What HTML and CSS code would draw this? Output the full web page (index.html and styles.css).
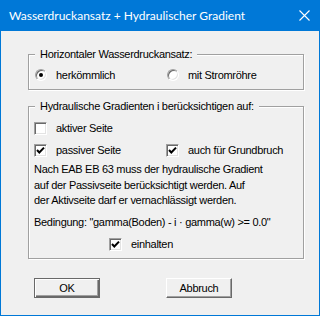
FILE: index.html
```html
<!DOCTYPE html>
<html lang="de">
<head>
    <meta charset="UTF-8">
    <title>Wasserdruckansatz + Hydraulischer Gradient</title>
    <link rel="stylesheet" href="styles.css">
</head>
<body>
<div class="dialog">
    <div class="titlebar">
        <span class="title">Wasserdruckansatz + Hydraulischer Gradient</span>
        <svg class="close" width="11" height="11" viewBox="0 0 11 11">
            <path d="M0.5 0.5 L10.5 10.5 M10.5 0.5 L0.5 10.5" stroke="#fff" stroke-width="1.1" fill="none"/>
        </svg>
    </div>
    <div class="client">
        <fieldset class="group g1">
            <legend>Horizontaler Wasserdruckansatz:</legend>
            <div class="row">
                <label class="opt"><span class="radio on"></span>herkömmlich</label>
                <label class="opt"><span class="radio"></span>mit Stromröhre</label>
            </div>
        </fieldset>
        <fieldset class="group g2">
            <legend>Hydraulische Gradienten i berücksichtigen auf:</legend>
            <div class="row">
                <label class="opt"><span class="check"></span>aktiver Seite</label>
            </div>
            <div class="row r2">
                <label class="opt"><span class="check on"><svg width="9" height="9" viewBox="0 0 9 9"><path d="M1 4 L3.3 6.5 L8 1.6" stroke="#000" stroke-width="2" fill="none"/></svg></span>passiver Seite</label>
                <label class="opt"><span class="check on"><svg width="9" height="9" viewBox="0 0 9 9"><path d="M1 4 L3.3 6.5 L8 1.6" stroke="#000" stroke-width="2" fill="none"/></svg></span>auch für Grundbruch</label>
            </div>
            <p class="note">Nach EAB EB 63 muss der hydraulische Gradient<br>auf der Passivseite berücksichtigt werden. Auf<br>der Aktivseite darf er vernachlässigt werden.</p>
            <p class="cond">Bedingung: "gamma(Boden) - i · gamma(w) &gt;= 0.0"</p>
            <div class="row r3">
                <label class="opt"><span class="check on"><svg width="9" height="9" viewBox="0 0 9 9"><path d="M1 4 L3.3 6.5 L8 1.6" stroke="#000" stroke-width="2" fill="none"/></svg></span>einhalten</label>
            </div>
        </fieldset>
        <div class="buttons">
            <button class="btn default">OK</button>
            <button class="btn">Abbruch</button>
        </div>
    </div>
</div>
</body>
</html>
```
FILE: styles.css
```css
*{
    box-sizing: border-box;
}
body{
    margin: 0;
    background: #f0f0f0;
}
.dialog{
    width: 320px;
    height: 316px;
    border: 1px solid #0078d7;
    border-top: 0;
    background: #f0f0f0;
    font-family: "Liberation Sans", Arial, sans-serif;
    font-size: 11px;
    letter-spacing: -0.3px;
    color: #000;
}
.titlebar{
    height: 31px;
    margin: 0 -1px;
    background: #0078d7;
    display: flex;
    align-items: center;
    padding: 0 10px 1px 9px;
}
.title{
    flex: 1;
    color: #fff;
    font-family: Lato, sans-serif;
    font-size: 12px;
    letter-spacing: 0;
}
.close{
    display: block;
    margin-top: 1px;
}
.client{
    padding: 16px 0 0 27px;
}
.group{
    width: 269px;
    margin: 0;
    padding: 0 5px 6px 5px;
    border: 1px solid #a0a0a0;
    box-shadow: 1px 1px 0 #fff, inset 1px 1px 0 #fff;
}
.group legend{
    margin-left: 1px;
    padding: 0 5px;
    line-height: 14px;
    background: #f0f0f0;
}
.g1 .row{
    margin-top: 6px;
}
.g2{
    margin-top: 9px;
}
.g2 .row{
    margin-top: 7px;
}
.g2 .r2{
    margin-top: 6px;
}
.row{
    display: flex;
    height: 16px;
    align-items: center;
}
.opt{
    width: 132px;
    display: flex;
    align-items: center;
    white-space: nowrap;
}
.radio, .check{
    flex: none;
    width: 13px;
    height: 13px;
    margin-right: 9px;
    background: #fff;
    border: 1px solid;
    border-color: #a0a0a0 #fff #fff #a0a0a0;
    box-shadow: inset 1px 1px 0 #696969, inset -1px -1px 0 #e3e3e3;
    display: flex;
    align-items: center;
    justify-content: center;
}
.radio{
    width: 12px;
    height: 12px;
    margin-left: 1px;
    margin-right: 9px;
    border-radius: 50%;
}
.radio.on::after{
    content: "";
    width: 4px;
    height: 4px;
    border-radius: 50%;
    background: #000;
}
.check svg{
    display: block;
}
.note{
    margin: 4px 0 0;
    line-height: 15.5px;
}
.cond{
    margin: 6px 0 0;
    line-height: 15.5px;
}
.g2 .r3{
    margin-top: 6px;
    padding-left: 75px;
}
.buttons{
    display: flex;
    margin-top: 19px;
    padding-left: 6px;
}
.btn{
    width: 66px;
    height: 20px;
    margin: 0 66px 0 0;
    padding: 0;
    font-family: "Liberation Sans", Arial, sans-serif;
    font-size: 11px;
    letter-spacing: -0.3px;
    color: #000;
    background: #f0f0f0;
    border: 1px solid;
    border-color: #fff #696969 #696969 #fff;
    box-shadow: inset -1px -1px 0 #a0a0a0;
}
.btn.default{
    border: 1px solid #696969;
    box-shadow: inset 1px 1px 0 #fff, inset -1px -1px 0 #696969, inset -2px -2px 0 #a0a0a0;
}
```
